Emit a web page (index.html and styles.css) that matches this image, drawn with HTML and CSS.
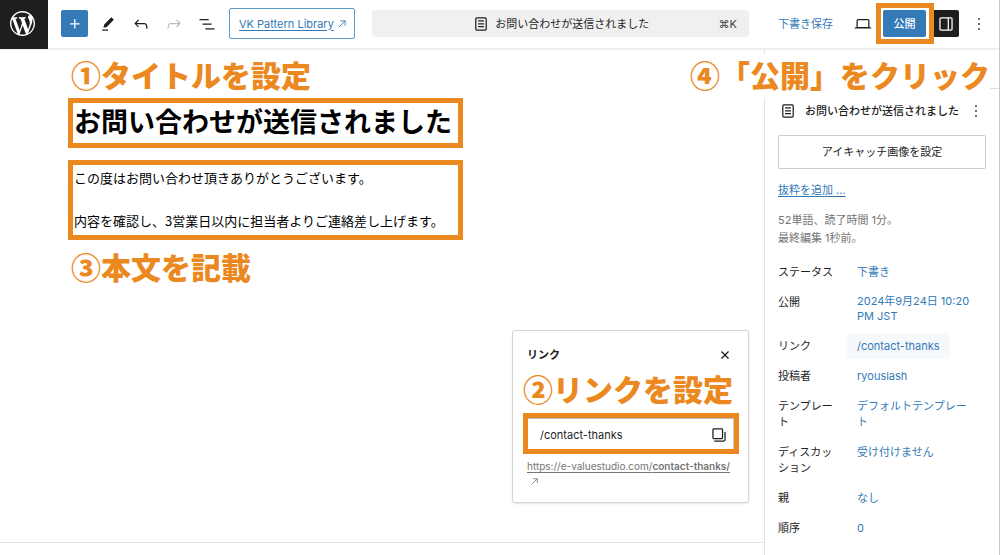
FILE: index.html
```html
<!DOCTYPE html>
<html lang="ja">
<head>
<meta charset="utf-8">
<meta name="viewport" content="width=device-width, initial-scale=1">
<title>お問い合わせが送信されました</title>
<link rel="stylesheet" href="styles.css">
</head>
<body>
<header class="topbar">
  <a class="logo" href="#" aria-label="WordPress">
    <svg viewBox="0 0 20 20"><path d="M20 10c0-5.51-4.49-10-10-10C4.48 0 0 4.49 0 10c0 5.52 4.48 10 10 10 5.51 0 10-4.48 10-10zM7.78 15.37L4.37 6.22c.55-.02 1.17-.08 1.17-.08.5-.06.44-1.13-.06-1.11 0 0-1.45.11-2.37.11-.18 0-.37 0-.58-.01C4.12 2.69 6.87 1.11 10 1.11c2.33 0 4.45.87 6.05 2.34-.68-.11-1.65.39-1.65 1.58 0 .74.45 1.36.9 2.1.35.61.55 1.36.55 2.46 0 1.49-1.4 5-1.4 5l-3.03-8.37c.54-.02.82-.17.82-.17.5-.05.44-1.25-.06-1.22 0 0-1.44.12-2.38.12-.87 0-2.33-.12-2.33-.12-.5-.03-.56 1.2-.06 1.22l.92.08 1.26 3.41zM17.41 10c.24-.64.74-1.87.43-4.25.7 1.29 1.05 2.71 1.05 4.25 0 3.29-1.73 6.24-4.4 7.78.97-2.59 1.94-5.2 2.92-7.78zM6.1 18.09C3.12 16.65 1.11 13.53 1.11 10c0-1.3.23-2.48.72-3.59C3.25 10.3 4.67 14.2 6.1 18.09zm4.03-6.63l2.58 6.98c-.86.29-1.76.45-2.71.45-.79 0-1.57-.11-2.29-.33.81-2.38 1.62-4.74 2.42-7.1z"/></svg>
  </a>
  <div class="tools">
    <button class="icon-btn primary" aria-label="追加"><svg class="icon" viewBox="0 0 24 24"><path d="M11 12.5V17.5H12.5V12.5H17.5V11H12.5V6H11V11H6V12.5H11Z"/></svg></button>
    <button class="icon-btn" aria-label="ツール"><svg class="icon" viewBox="0 0 24 24"><path d="m19 7-3-3-8.5 8.5-1 4 4-1L19 7Zm-7 11.5H5V20h7v-1.5Z"/></svg></button>
    <button class="icon-btn" aria-label="元に戻す"><svg class="icon" viewBox="0 0 24 24"><path d="M18.3 11.7c-.6-.6-1.4-.9-2.3-.9H6.7l2.9-3.3-1.1-1-4.5 5L8.5 16l1-1-2.7-2.7H16c.5 0 .9.2 1.3.5 1 1 1 3.4 1 4.5v.3h1.5v-.2c0-1.5 0-4.3-1.5-5.7z"/></svg></button>
    <button class="icon-btn" aria-label="やり直す" disabled><svg class="icon" viewBox="0 0 24 24"><path d="M15.6 6.5l-1.1 1 2.9 3.3H8c-.9 0-1.7.3-2.3.9-1.4 1.5-1.4 4.2-1.4 5.6v.2h1.5v-.3c0-1.1 0-3.5 1-4.5.3-.3.7-.5 1.3-.5h9.2L14.5 15l1.1 1.1 4.6-4.6-4.6-5z"/></svg></button>
    <button class="icon-btn" aria-label="リスト表示"><svg class="icon" viewBox="0 0 24 24"><path d="M3 6h11v1.5H3V6Zm3.5 5.5h11V13h-11v-1.5ZM21 17H10v1.5h11V17Z"/></svg></button>
  </div>
  <a class="pattern-link" href="#"><span class="underlined">VK Pattern Library</span><svg class="arrow" viewBox="0 0 9 9"><path d="M1 8 8 1M2.5 1H8v5.5"/></svg></a>
  <button class="command">
    <span class="command-title"><svg class="icon" viewBox="0 0 24 24"><path d="M15.5 7.5h-7V9h7V7.5Zm-7 3.5h7v1.5h-7V11Zm7 3.5h-7V16h7v-1.5Z"/><path fill-rule="evenodd" d="M17 4H7a2 2 0 0 0-2 2v12a2 2 0 0 0 2 2h10a2 2 0 0 0 2-2V6a2 2 0 0 0-2-2ZM7 5.5h10a.5.5 0 0 1 .5.5v12a.5.5 0 0 1-.5.5H7a.5.5 0 0 1-.5-.5V6a.5.5 0 0 1 .5-.5Z"/></svg>お問い合わせが送信されました</span>
    <span class="shortcut">⌘K</span>
  </button>
  <div class="actions">
    <button class="draft">下書き保存</button>
    <button class="icon-btn" aria-label="表示"><svg class="icon" viewBox="0 0 24 24"><path d="M20.5 16h-.7V8c0-1.1-.9-2-2-2H6.2c-1.1 0-2 .9-2 2v8h-.7c-.8 0-1.5.7-1.5 1.5h20c0-.8-.7-1.5-1.5-1.5zM5.7 8c0-.3.2-.5.5-.5h11.6c.3 0 .5.2.5.5v7.6H5.7V8z"/></svg></button>
    <span class="publish-mark"><button class="publish">公開</button></span>
    <button class="icon-btn dark" aria-label="設定"><svg class="icon" viewBox="0 0 24 24"><path d="M18 4H6c-1.1 0-2 .9-2 2v12c0 1.1.9 2 2 2h12c1.1 0 2-.9 2-2V6c0-1.1-.9-2-2-2zm-4 14.5H6c-.3 0-.5-.2-.5-.5V6c0-.3.2-.5.5-.5h8v13zm4.5-.5c0 .3-.2.5-.5.5h-2.5v-13H18c.3 0 .5.2.5.5v12z"/></svg></button>
    <button class="icon-btn" aria-label="オプション"><svg class="icon" viewBox="0 0 24 24"><path d="M13 19h-2v-2h2v2zm0-6h-2v-2h2v2zm0-6h-2V5h2v2z"/></svg></button>
  </div>
</header>
<p class="note note-publish">④「公開」をクリック</p>
<div class="workspace">
  <main class="canvas">
    <div class="document">
      <p class="note">①タイトルを設定</p>
      <h1 class="marked post-title">お問い合わせが送信されました</h1>
      <div class="marked post-body">
        <p>この度はお問い合わせ頂きありがとうございます。</p>
        <p>内容を確認し、3営業日以内に担当者よりご連絡差し上げます。</p>
      </div>
      <p class="note">③本文を記載</p>
    </div>
    <section class="popover">
      <div class="popover-head">
        <h2><label for="slug">リンク</label></h2>
        <button class="close" aria-label="閉じる"><svg class="icon" viewBox="0 0 24 24"><path d="M12 13.06l3.712 3.713 1.061-1.06L13.061 12l3.712-3.712-1.06-1.06L12 10.938 8.288 7.227l-1.061 1.06L10.939 12l-3.712 3.712 1.06 1.061L12 13.061z"/></svg></button>
      </div>
      <p class="note">②リンクを設定</p>
      <div class="marked slug-field">
        <input id="slug" type="text" value="/contact-thanks">
        <button class="copy" aria-label="コピー"><svg class="icon" viewBox="0 0 24 24"><path fill-rule="evenodd" d="M5.625 5.5h9.75c.069 0 .125.056.125.125v9.75a.125.125 0 0 1-.125.125h-9.75a.125.125 0 0 1-.125-.125v-9.75c0-.069.056-.125.125-.125ZM4 5.625C4 4.728 4.728 4 5.625 4h9.75C16.273 4 17 4.728 17 5.625v9.75c0 .898-.727 1.625-1.625 1.625h-9.75A1.625 1.625 0 0 1 4 15.375v-9.75Zm14.5 11.656v-9H20v9C20 18.8 18.77 20 17.251 20H6.25v-1.5h11.001c.69 0 1.249-.528 1.249-1.219Z"/></svg></button>
      </div>
      <a class="permalink" href="#"><span class="underlined">https://e-valuestudio.com/<b>contact-thanks/</b></span> <svg class="arrow" viewBox="0 0 9 9"><path d="M1 8 8 1M2.5 1H8v5.5"/></svg></a>
    </section>
  </main>
  <aside class="sidebar">
    <div class="tabs"></div>
    <div class="panel">
      <div class="panel-title">
        <svg class="icon" viewBox="0 0 24 24"><path d="M15.5 7.5h-7V9h7V7.5Zm-7 3.5h7v1.5h-7V11Zm7 3.5h-7V16h7v-1.5Z"/><path fill-rule="evenodd" d="M17 4H7a2 2 0 0 0-2 2v12a2 2 0 0 0 2 2h10a2 2 0 0 0 2-2V6a2 2 0 0 0-2-2ZM7 5.5h10a.5.5 0 0 1 .5.5v12a.5.5 0 0 1-.5.5H7a.5.5 0 0 1-.5-.5V6a.5.5 0 0 1 .5-.5Z"/></svg>
        <h2>お問い合わせが送信されました</h2>
        <button class="more" aria-label="操作"><svg class="icon" viewBox="0 0 24 24"><path d="M13 19h-2v-2h2v2zm0-6h-2v-2h2v2zm0-6h-2V5h2v2z"/></svg></button>
      </div>
      <button class="featured">アイキャッチ画像を設定</button>
      <a class="excerpt" href="#">抜粋を追加 ...</a>
      <p class="meta">52単語、読了時間 1分。<br>最終編集 1秒前。</p>
      <dl class="rows">
        <div class="row"><dt>ステータス</dt><dd><button>下書き</button></dd></div>
        <div class="row"><dt>公開</dt><dd><button class="date">2024年9月24日 10:20 PM JST</button></dd></div>
        <div class="row"><dt>リンク</dt><dd><button class="active">/contact-thanks</button></dd></div>
        <div class="row"><dt>投稿者</dt><dd><button>ryouslash</button></dd></div>
        <div class="row"><dt>テンプレート</dt><dd><button>デフォルトテンプレート</button></dd></div>
        <div class="row"><dt>ディスカッション</dt><dd><button>受け付けません</button></dd></div>
        <div class="row"><dt>親</dt><dd><button>なし</button></dd></div>
        <div class="row"><dt>順序</dt><dd><button>0</button></dd></div>
      </dl>
    </div>
  </aside>
</div>
</body>
</html>
```
FILE: styles.css
```css
:root {
  --ink: #1e1e1e;
  --blue: #337ab7;
  --orange: #ec8820;
  --line: #eeeeee;
}

* {
  box-sizing: border-box;
}

body {
  margin: 0;
  min-height: 100vh;
  display: flex;
  flex-direction: column;
  position: relative;
  border-right: 1px solid #c8c8c8;
  background: #fff;
  color: var(--ink);
  font: 11px/16px Inter, "Noto Sans CJK JP", sans-serif;
}

h1, h2, p, dl, dd {
  margin: 0;
}

button {
  padding: 0;
  border: 0;
  background: none;
  color: inherit;
  font: inherit;
}

a {
  color: var(--blue);
  text-decoration: none;
}

svg {
  display: block;
  fill: currentColor;
}

.icon {
  width: 20px;
  height: 20px;
  flex: none;
}

.arrow {
  width: 8px;
  height: 8px;
  fill: none;
  stroke: currentColor;
}

.underlined {
  text-decoration: underline;
  text-underline-offset: 2px;
}

/* Top bar */
.topbar {
  display: flex;
  align-items: center;
  height: 50px;
  padding-bottom: 1px;
  border-bottom: 2px solid var(--line);
}

.logo {
  display: grid;
  place-items: center;
  align-self: flex-start;
  flex: none;
  width: 48px;
  height: 49px;
  padding-right: 3px;
  padding-bottom: 2px;
  background: var(--ink);
  color: #fff;
}

.logo svg {
  width: 25px;
  height: 25px;
}

.tools {
  display: flex;
  gap: 6px;
  margin: 0 9px 0 13px;
}

.icon-btn {
  display: grid;
  place-items: center;
  flex: none;
  width: 27px;
  height: 27px;
  border-radius: 2px;
}

.icon-btn:disabled {
  color: #bbb;
}

.primary {
  background: var(--blue);
  color: #fff;
}

.dark {
  background: var(--ink);
  color: #fff;
}

.pattern-link {
  display: flex;
  align-items: center;
  gap: 4px;
  flex: none;
  height: 31px;
  padding: 0 8px 0 9px;
  border: 1px solid #5c9ac9;
  border-radius: 2px;
}

.command {
  display: flex;
  align-items: center;
  flex: 1;
  height: 27px;
  margin: 0 29px 0 17px;
  padding: 0 12px 0 30px;
  border-radius: 4px;
  background: #f0f0f0;
}

.command-title {
  display: flex;
  align-items: center;
  justify-content: center;
  gap: 4px;
  flex: 1;
}

.shortcut {
  color: #444;
}

.actions {
  display: flex;
  align-items: center;
  flex: none;
  padding-right: 7px;
}

.draft {
  margin-right: 16px;
  color: var(--blue);
}

.publish-mark {
  position: relative;
  margin: 0 6px 0 7px;
}

.publish-mark::after {
  content: "";
  position: absolute;
  inset: -7px -8px -7px -7px;
  border: 5px solid var(--orange);
  box-shadow: inset 0 0 0 2px #fff;
  pointer-events: none;
}

.publish {
  display: block;
  width: 43px;
  height: 27px;
  border-radius: 2px;
  background: var(--blue);
  color: #fff;
  font-weight: 500;
}

.actions .dark + .icon-btn {
  margin-left: 6px;
}

/* Tutorial notes and frames */
.note {
  padding-bottom: 4px;
  color: var(--orange);
  font: 900 30px/40px "Noto Sans CJK JP", sans-serif;
  white-space: nowrap;
}

.marked {
  border: 5px solid var(--orange);
}

.note-publish {
  position: absolute;
  top: 54px;
  right: 9px;
  z-index: 1;
  background: #fff;
}

/* Editor */
.workspace {
  display: flex;
  flex: 1;
}

.canvas {
  position: relative;
  flex: 1;
  border-bottom: 12px solid #fff;
  box-shadow: inset 0 -1px #e4e4e4;
}

.document {
  width: min-content;
  padding: 4px 0 0 68px;
  color: #000;
}

.document > .note {
  padding-left: 3px;
}

.post-title {
  min-width: 395px;
  height: 50px;
  padding-left: 1px;
  font: 700 27px/36px "Noto Sans CJK JP", sans-serif;
  white-space: nowrap;
}

.post-body {
  display: grid;
  gap: 19px;
  margin: 12px 0 6px;
  padding: 1px 0 2px 1px;
  font: 13px/24px "Noto Sans CJK JP", sans-serif;
  white-space: nowrap;
}

.popover {
  position: absolute;
  right: 15px;
  bottom: 40px;
  width: 237px;
  padding: 10px 9px 13px 10px;
  border: 1px solid #d4d4d4;
  border-radius: 3px;
  background: #fff;
  box-shadow: 0 1px 2px #0000001a;
}

.popover-head {
  display: flex;
  align-items: center;
  justify-content: space-between;
  height: 27px;
  padding: 0 4px;
}

.popover-head h2 {
  font: inherit;
  font-weight: 700;
}

.slug-field {
  display: flex;
  align-items: center;
  height: 41px;
  margin-top: 1px;
  padding-top: 3px;
  box-shadow: inset 0 1px #bbb, inset -1px 0 #ccc;
}

.slug-field input {
  flex: 1;
  min-width: 0;
  padding: 0 0 0 12px;
  border: 0;
  outline: 0;
  background: none;
  color: inherit;
  font: inherit;
}

.copy {
  margin-right: 5px;
}

.permalink {
  display: block;
  padding: 5px 4px 0;
  color: #757575;
  font-size: 10px;
  line-height: 15px;
}

.permalink b {
  font-weight: 600;
}

.permalink .arrow {
  display: inline-block;
  width: 7px;
  height: 7px;
  margin-left: 4px;
}

/* Settings sidebar */
.sidebar {
  width: 235px;
  flex: none;
  border-left: 1px solid #e4e4e4;
}

.tabs {
  height: 39px;
  border-bottom: 1px solid #ddd;
}

.panel {
  padding: 12px 13px 0;
}

.panel-title {
  display: flex;
  align-items: center;
  gap: 7px;
  height: 20px;
}

.panel-title h2 {
  flex: 1;
  font: inherit;
  font-weight: 500;
  white-space: nowrap;
}

.featured {
  display: block;
  width: 100%;
  height: 34px;
  margin: 14px 0 13px;
  border: 1px solid #ccc;
  border-radius: 2px;
}

.excerpt {
  display: block;
  text-decoration: underline;
  text-underline-offset: 2px;
}

.meta {
  margin: 13px 0 12px;
  color: #757575;
  line-height: 18px;
}

.rows {
  display: grid;
  gap: 4px;
}

.row {
  display: grid;
  grid-template-columns: 62px 1fr;
  gap: 7px;
}

.row dt {
  padding: 5px 0;
}

.row button {
  padding: 5px 10px;
  color: var(--blue);
  text-align: left;
}

.row .date {
  line-height: 15px;
}

.row .active {
  background: #f5f9fc;
}
```
